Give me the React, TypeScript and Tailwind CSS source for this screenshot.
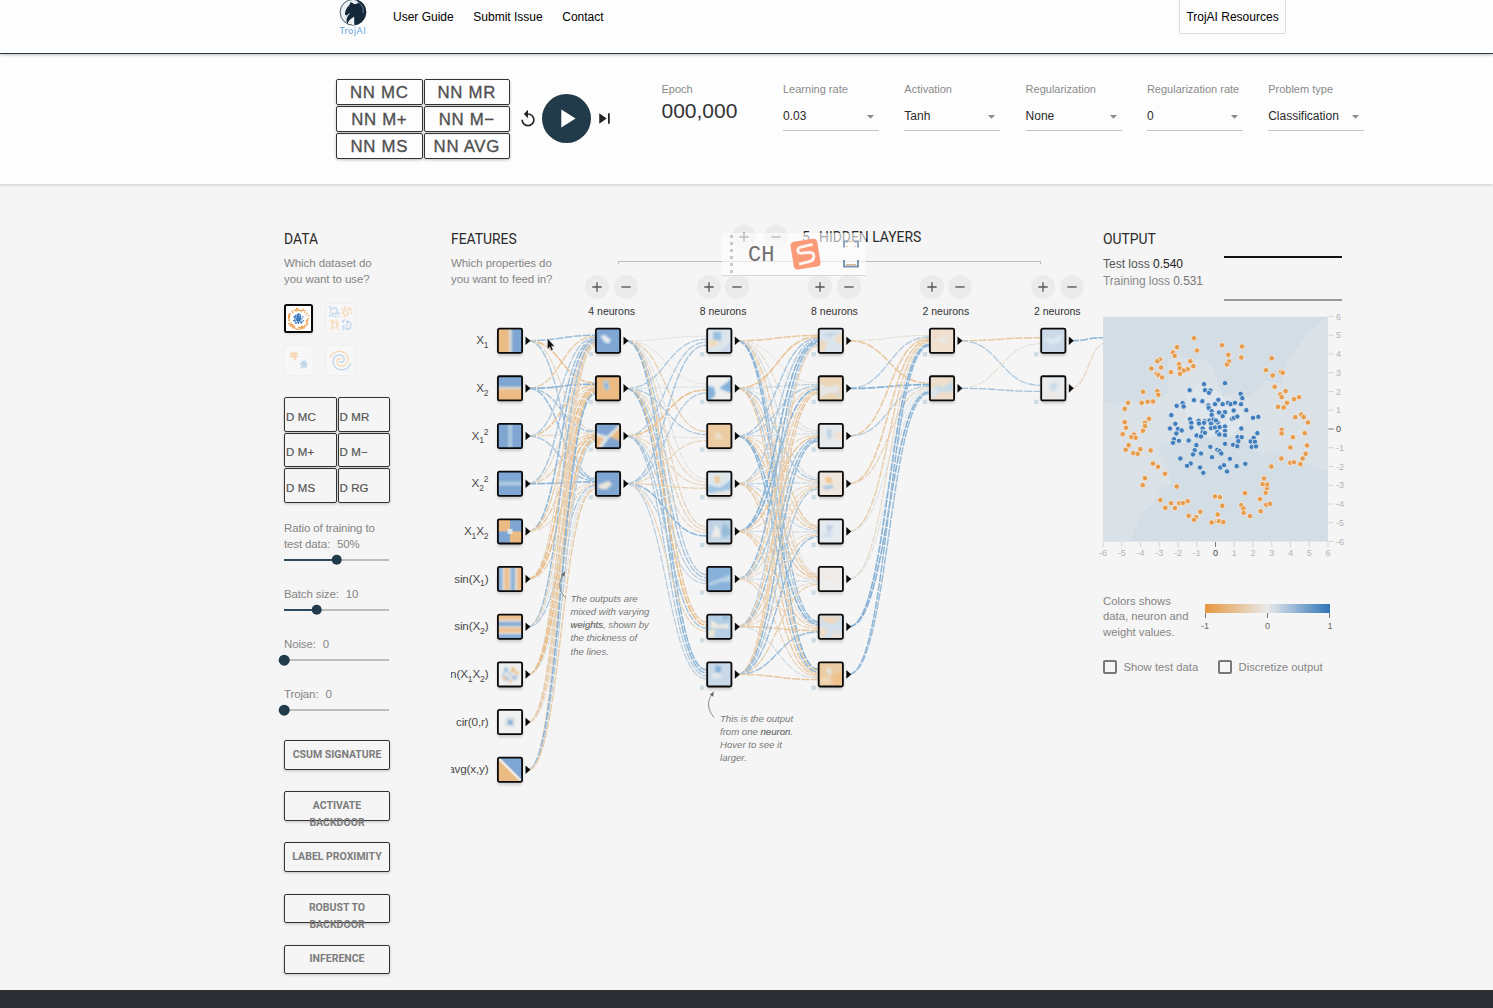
import React from "react";
import { MdReplay, MdSkipNext, MdPlayArrow, MdArrowDropDown, MdAdd, MdRemove } from "react-icons/md";

const SANS = "font-['Liberation_Sans',Arial,sans-serif]";

/* ---------- network data ---------- */
const ROW0 = 340.7;
const ROW = 47.67;
const cy = (i: number) => ROW0 + ROW * i;
const COLS = [510, 608, 719.3, 830.8, 942, 1053.3];
const COUNTS = [10, 4, 8, 8, 2, 2];

const WEIGHTS: number[][][] = [
  [
    [0.7, -0.8, -0.3, 0.6],
    [-0.6, 0.9, 0.6, 0.7],
    [0.5, -0.7, -0.3, 0.6],
    [0.6, -0.3, -0.5, 0.9],
    [0.8, -0.6, -0.6, -0.3],
    [-0.4, -0.9, -0.9, -0.4],
    [0.7, -0.4, 0.1, 0.5],
    [-0.5, -0.8, -0.9, 0.1],
    [-0.4, -0.6, -0.5, -0.2],
    [-0.4, 0.9, 0.4, -0.6],
  ],
  [
    [0.05, -0.1, -0.5, 0.1, -0.4, 0.5, -0.7, 0.8],
    [0.5, 0.1, 0.5, -0.3, -0.4, 0.6, -0.9, 0.8],
    [0.5, -0.8, -0.1, -0.4, -0.3, 0.4, 0.6, 0.5],
    [0.6, 0.5, -0.4, -0.5, 0.8, 0.3, -0.4, 0.4],
  ],
  [
    [-0.7, -0.1, -0.2, 0.2, -0.6, -0.2, 0.7, 0.9],
    [-0.8, 0.3, 0.1, 0.5, -0.4, -0.5, 0.5, -0.6],
    [0.6, 0.5, 0.2, -0.4, -0.5, -0.6, 0.9, 0.8],
    [0.5, -0.4, -0.3, 0.3, 0.3, -0.6, -0.3, -0.6],
    [0.9, 0.9, -0.7, -0.3, 0.2, -0.3, -0.5, -0.6],
    [0.8, -0.5, 0.6, -0.3, -0.2, 0.2, -0.4, -0.4],
    [0.4, -0.6, 0.7, -0.5, -0.4, -0.3, -0.7, 0.2],
    [-0.5, -0.6, 0.8, 0.5, 0.7, -0.5, 0.7, -0.7],
  ],
  [
    [-0.2, -0.7],
    [0.5, 0.95],
    [-0.7, 0.5],
    [-0.7, -0.4],
    [-0.6, 0.1],
    [-0.3, 0.1],
    [0.9, 0.9],
    [0.8, 0.7],
  ],
  [
    [-0.7, 0.5],
    [-0.15, 0.6],
  ],
];

const mix = (w: number) => {
  const a = [228, 230, 230];
  const b = w > 0 ? [126, 173, 212] : [234, 186, 128];
  const t = Math.min(1, Math.abs(w) * 0.95 + 0.05);
  return `rgb(${a.map((v, i) => Math.round(v + (b[i] - v) * t)).join(",")})`;
};

const B = "#7fa5d2";
const O = "#ecbb84";
type Shape = [string, string];
type Tile = { bg: string; s: Shape[]; soft?: number };

const TILES: Tile[][] = [
  [
    { bg: B, s: [["M-4 -4H12V30H-4Z", O], ["M12 -4H15V30H12Z", "#d7dcd8"]] },
    { bg: B, s: [["M-4 13H30V30H-4Z", O], ["M-4 11.5H30V14H-4Z", "#dfdcd0"]] },
    { bg: B, s: [["M11 -4H15.5V30H11Z", "#adc9e0"]] },
    { bg: B, s: [["M-4 10.500H30V15H-4Z", "#adc9e0"]] },
    { bg: B, s: [["M-4 -4H13V13H-4Z", O], ["M13 13H30V30H13Z", O], ["M10.500 10.500H15.500V15.500H10.500Z", "#dfe6ea"]], soft: 0.5 },
    { bg: "#e6e3dc", s: [["M-4 -4H5.500V30H-4Z", "#8db3d8"], ["M7.500 -4H12V30H7.500Z", "#eebf8c"], ["M13.500 -4H18V30H13.500Z", "#8db3d8"], ["M20 -4H30V30H20Z", "#eebf8c"]] },
    { bg: "#e6e3dc", s: [["M-4 -4V6H30V-4Z", "#eebf8c"], ["M-4 8V12.500H30V8Z", "#86acd6"], ["M-4 14V18.500H30V14Z", "#eebf8c"], ["M-4 20.500V30H30V20.500Z", "#86acd6"]] },
    { bg: "#eeefef", s: [["M7 6h4v5h-4zM15 14h5v4h-5zM9 15h3v4h-3zM5 12h3v3h-3z", "#a5c4e0"], ["M14 6h4v5h-4zM6 15h3v4h-3zM12 18h3v3h-3zM18 10h4v3h-4z", "#eec494"], ["M11 11h4v4h-4z", "#c9d5dc"]] },
    { bg: "#f0f1f1", s: [["M8 8h10v10h-10z", "#dfe5e9"], ["M10.800 10.800h5v5h-5z", "#84aed8"]] },
    { bg: B, s: [["M-4 -4L30 30H-4Z", O], ["M-4 -6L30 28V32L-4 -2Z", "#ece8df"]], soft: 0.5 },
  ],
  [
    { bg: B, s: [["M5 8L10 7L16 12L14 16L10 15Z", "#e4ecf1"]] },
    { bg: O, s: [["M8 5L13 5L15 13L11 16L8 11Z", "#b9cbd2"], ["M10 8H13V13H10Z", "#82b0da"]] },
    { bg: B, s: [["M-2 10L9 14L5 28H-4Z", O], ["M13 14L28 -2V20L18 15Z", O], ["M-2 9L12 13L26 0V3L14 15L6 26H3L9 15L-2 12Z", "#e3e9e8"]] },
    { bg: B, s: [["M3 14L14 10L17 14L11 19L4 18Z", "#eae6da"]] },
  ],
  [
    { bg: "#dde5ec", s: [["M7 4L15 4L15 13L7 12Z", "#98c0de"], ["M2 13L10 12L12 17L3 20Z", "#efdcbf"], ["M10 26L26 14V26Z", "#c9d7e8"]] },
    { bg: "#eeeeef", s: [["M-2 10L8 12L9 20L4 25H-2Z", "#85b2da"], ["M13 13L26 3V18L20 16Z", "#85b2da"]] },
    { bg: "#eccba2", s: [["M11 7L14 12L18 16H8Z", "#ecdfc9"]] },
    { bg: "#dfe7ec", s: [["M1 14L14 17L26 8V18L10 22L1 22Z", "#a0c4e1"], ["M8 5L14 6L13 13L9 12Z", "#ecca9c"], ["M10 21L26 20V26H6Z", "#ece6e0"]] },
    { bg: "#bfd3e5", s: [["M18 4L26 14L18 20L14 14Z", "#96bddb"], ["M9 6L14 12L14 19H5Z", "#ebebe9"], ["M2 22H26V26H2Z", "#d3dfeb"]] },
    { bg: "#88b2da", s: [["M2 17L13 13L25 8V16L14 16L3 20Z", "#b9d2e6"]] },
    { bg: "#b6cfe4", s: [["M5 6L12 11L22 10L23 15L10 14L4 14Z", "#eeeae0"], ["M2 17L9 15L8 24H2Z", "#eae2d4"], ["M16 2L24 3L18 7Z", "#8fb9da"]] },
    { bg: "#c9d9e8", s: [["M9 4L15 5L14 11L9 11Z", "#82b0d8"], ["M6 12L13 11L15 17L5 17Z", "#e2e8ec"]] },
  ],
  [
    { bg: "#dbe4ec", s: [["M2 12L10 15L6 24H1Z", "#eed8bd"], ["M17 9L25 5V18L18 14Z", "#f0dcc6"], ["M4 6L20 4L12 10Z", "#c3d6e6"]] },
    { bg: "#ecd6b8", s: [["M2 8L10 12L18 10L24 12L18 18L11 18L2 22Z", "#e4e6e6"], ["M19 15L24 20L20 22Z", "#cfdeea"]] },
    { bg: "#e7eaec", s: [["M9 5L14 7L14 16L9 15Z", "#bfd4e4"], ["M16 9L24 8V18L17 15Z", "#f0e0d2"]] },
    { bg: "#efe6de", s: [["M7 6L14 7L14 12L9 12Z", "#eec48e"], ["M4 16L14 14L16 17L8 19Z", "#a6c6e0"]] },
    { bg: "#e5eaef", s: [["M9 6L15 7L13 14L9 13Z", "#bdd2e5"], ["M5 14L15 15L12 19L6 18Z", "#d0deea"]] },
    { bg: "#efedeb", s: [["M6 8L18 9L16 14L7 14Z", "#f0e9e4"]] },
    { bg: "#d3e0ec", s: [["M2 3H24L16 10L9 9Z", "#f0d8be"], ["M2 14L10 15L6 24H2Z", "#f0dcc4"], ["M16 16L25 20V25H13Z", "#e7dfd8"]] },
    { bg: "#eccca4", s: [["M9 6L14 7L13 14L9 12Z", "#e4e2dc"], ["M14 14L24 10V24H16Z", "#eec08a"], ["M4 15L13 16L12 22H4Z", "#eed8b8"]] },
  ],
  [
    { bg: "#efe0cf", s: [["M10 9L20 10L17 15L10 14Z", "#e8e8e6"], ["M3 3L12 4L7 11Z", "#f0dcc8"]] },
    { bg: "#efdecb", s: [["M6 10L14 12L24 6V17L14 16L8 18Z", "#c6dbe8"], ["M2 12L9 14L7 22H2Z", "#dbe5ed"]] },
  ],
  [
    { bg: "#cbd9e8", s: [["M4 9L13 12L20 6L22 13L13 17L6 14Z", "#dde8f0"]] },
    { bg: "#e9ebec", s: [["M9 9L18 7L16 15L10 15Z", "#cddce8"], ["M4 18L20 19V23H4Z", "#efeae5"]] },
  ],
];

function Link({ x0, y0, x1, y1, w }: { x0: number; y0: number; x1: number; y1: number; w: number }) {
  const m = (x0 + x1) / 2;
  return (
    <path
      d={`M${x0} ${y0}C${m} ${y0} ${m} ${y1} ${x1} ${y1}`}
      fill="none"
      stroke={mix(w)}
      strokeWidth={0.9 + Math.abs(w) * 0.8}
      strokeDasharray="8 1.2"
    />
  );
}

function NodeTile({ x, y, tile, id }: { x: number; y: number; tile: Tile; id: string }) {
  return (
    <g transform={`translate(${x - 13} ${y - 13})`}>
      <rect x="0.500" y="2" width="25" height="26" rx="2" fill="#000" opacity="0.18" filter="url(#shade)" />
      <clipPath id={id}>
        <rect x="1" y="1" width="24" height="24" />
      </clipPath>
      <g clipPath={`url(#${id})`}>
        <rect width="26" height="26" fill={tile.bg} />
        <g filter={tile.soft ? "url(#soft1)" : "url(#soft2)"}>
          {tile.s.map(([d, f], i) => (
            <path key={i} d={d} fill={f} />
          ))}
        </g>
      </g>
      <rect x="0.900" y="0.900" width="24.200" height="24.200" rx="1.500" fill="none" stroke="#0a0a0a" strokeWidth="1.800" />
    </g>
  );
}

/* Each label is a list of [text, baseline shift] pieces; shifted pieces are small. */
const LABELS: [string, number][][] = [
  [["X", 0], ["1", 3.5]],
  [["X", 0], ["2", 3.5]],
  [["X", 0], ["1", 3.5], ["2", -5]],
  [["X", 0], ["2", 3.5], ["2", -5]],
  [["X", 0], ["1", 3.5], ["X", 0], ["2", 3.5]],
  [["sin(X", 0], ["1", 3.5], [")", 0]],
  [["sin(X", 0], ["2", 3.5], [")", 0]],
  [["sin(X", 0], ["1", 3.5], ["X", 0], ["2", 3.5], [")", 0]],
  [["cir(0,r)", 0]],
  [["avg(x,y)", 0]],
];

function Network() {
  const links: React.ReactNode[] = [];
  WEIGHTS.forEach((layer, l) =>
    layer.forEach((row, i) =>
      row.forEach((w, j) => {
        const n = COUNTS[l];
        links.push(
          <Link key={`${l}-${i}-${j}`} x0={COLS[l] + 18} y0={cy(i)} x1={COLS[l + 1] - 13} y1={cy(j) + ((i - (n - 1) / 2) / n) * 12} w={w} />
        );
      })
    )
  );
  return (
    <svg className="absolute left-0 top-0 pointer-events-none" width="652" height="640" viewBox="451 184 652 640" fontFamily="'Liberation Sans', Arial, sans-serif">
      <defs>
        <filter id="soft1"><feGaussianBlur stdDeviation="0.5" /></filter>
        <filter id="soft2"><feGaussianBlur stdDeviation="0.8" /></filter>
        <filter id="shade" x="-30%" y="-30%" width="160%" height="160%"><feGaussianBlur stdDeviation="1.5" /></filter>
      </defs>
      {links}
      <Link x0={1071} y0={cy(0)} x1={1103} y1={337.7} w={0.8} />
      <Link x0={1071} y0={cy(1)} x1={1106} y1={343} w={-0.35} />
      {TILES.map((col, c) =>
        col.map((t, r) => (
          <g key={`${c}-${r}`}>
            {c > 0 && <rect x={COLS[c] - 19.3} y={cy(r) + 11.3} width="4.400" height="4.400" fill="#cfdce3" />}
            <NodeTile x={COLS[c]} y={cy(r)} tile={t} id={`tile-${c}-${r}`} />
            <path d={`M${COLS[c] + 15.5} ${cy(r) - 4.3}l5 4.300l-5 4.300z`} fill="#0a0a0a" />
          </g>
        ))
      )}
      <g fontSize="11.700" fill="#4a4a4a" textAnchor="end">
        {LABELS.map((parts, i) => (
          <text key={i} x="488.500" y={cy(i) + 3.7} letterSpacing="-0.150">
            {parts.map(([t, s], k) => (
              <tspan key={k} dy={s - (k ? parts[k - 1][1] : 0)} fontSize={s ? 8.6 : undefined}>{t}</tspan>
            ))}
          </text>
        ))}
      </g>
      <g fill="none" stroke="#8a8a8a" strokeWidth="1">
        <path d="M565.500 597.500C558 590 558 582 564 573.500" />
        <path d="M714 717.500C707 709 707 701 712.500 693.500" />
      </g>
      <path d="M565 571.500l-4 3l3.500 2.200z" fill="#666" />
      <path d="M713.800 691.500l-4 3l3.500 2.200z" fill="#666" />
      <g fontSize="9.600" fontStyle="italic" fill="#777">
        <text x="570.500" y="602">The outputs are</text>
        <text x="570.500" y="615.200">mixed with varying</text>
        <text x="570.500" y="628.400"><tspan fill="#666" stroke="#666" strokeWidth="0.150">weights</tspan>, shown by</text>
        <text x="570.500" y="641.400">the thickness of</text>
        <text x="570.500" y="654.500">the lines.</text>
        <text x="720" y="722">This is the output</text>
        <text x="720" y="735.200">from one <tspan fill="#666" stroke="#666" strokeWidth="0.150">neuron</tspan>.</text>
        <text x="720" y="748.200">Hover to see it</text>
        <text x="720" y="761.400">larger.</text>
      </g>
      <path d="M547.500 338.500V349l2.300-2l1.600 3.500l1.700-.8l-1.600-3.400h3.100z" fill="#111" stroke="#ddd" strokeWidth="0.400" />
    </svg>
  );
}

/* ---------- scatter plot ---------- */
const ORANGE_PTS =
  "312,354 261,381 249,397 254,407 321,391 396,375 456,379 415,404 417,424 411,433 454,412 545,414 528,450 548,466 573,455 578,458 210,418 202,423 184,445 213,442 267,432 269,444 301,423 310,438 293,447 281,451 270,461 243,456 200,461 206,465 216,472 159,515 202,513 205,524 114,548 104,566 155,548 173,545 189,544 177,596 165,608 165,618 104,606 108,623 98,642 159,632 132,643 124,651 137,653 554,500 587,513 571,523 575,531 591,548 612,537 627,531 564,560 581,562 616,591 634,583 641,591 654,607 575,629 575,640 644,639 609,651 116,675 107,689 151,687 130,699 143,701 182,691 189,730 204,740 225,761 165,774 158,795 260,799 211,840 243,849 226,863 255,864 268,849 279,849 293,843 331,875 296,887 318,891 312,899 375,829 390,831 397,857 383,883 365,907 382,903 387,903 400,906 454,855 460,865 461,878 480,888 465,819 510,837 512,873 529,854 540,851 527,818 531,804 531,793 518,792 522,775 544,739 574,715 601,728 612,726 631,732 638,715 647,701 651,676 601,682";
const BLUE_PTS =
  "405,489 342,492 299,510 345,510 361,511 357,518 452,521 457,534 312,540 337,543 385,539 375,552 398,552 414,548 422,552 435,548 453,552 278,549 281,559 260,557 355,556 356,563 365,573 365,584 387,577 405,576 398,588 431,571 469,570 244,585 426,596 432,593 442,589 489,593 505,590 300,597 304,608 304,622 256,611 240,625 264,626 275,631 259,640 252,657 326,602 327,610 344,603 359,601 370,604 383,607 363,610 338,625 338,636 345,638 363,624 375,622 389,621 405,619 382,636 388,643 405,632 405,645 320,646 333,649 454,625 502,639 443,651 455,651 491,653 296,661 267,662 249,668 405,671 429,674 442,678 445,663 482,664 485,680 495,665 498,679 319,675 314,690 361,680 382,689 389,693 394,700 309,703 333,700 366,711 271,715 302,730 291,737 330,742 340,758 391,742 402,735 411,754 420,716 440,738 466,731 371,598 378,601 342,608";
const parse = (s: string) => s.split(" ").map((p) => p.split(",").map(Number));

function Plot() {
  const ticks = Array.from({ length: 13 }, (_, i) => i - 6);
  return (
    <svg width="250" height="246" viewBox="1098 313 250 246" className="block -ml-[5px]" fontFamily="'Liberation Sans', Arial, sans-serif">
      <svg x="1103" y="316.500" width="225" height="225.300" viewBox="39 289 675 676">
        <rect x="39" y="289" width="675" height="676" fill="#d3dde6" />
        <path d="M39 545L90 553L125 540L160 552L200 535L232 520L238 460L232 420L262 405L300 420L345 420L372 450L385 490L400 525L440 520L480 530L510 500L525 480L575 490L590 425L625 380L660 330L714 289V752L675 745L665 735L625 722L580 715L560 690L510 705L480 670L400 640L330 650L290 670L235 665L200 680L225 720L245 790L215 800L190 850L155 880L125 950L110 965H39Z" fill="#dae2e8" />
        <path d="M285 520L340 480L385 520L440 560L470 600L420 650L330 650L285 600Z" fill="#e0e7ec" />
        <g fill="#e79b4d" stroke="#f3ede4" strokeWidth="2.500">
          {parse(ORANGE_PTS).map(([x, y], i) => <circle key={i} cx={x} cy={y} r="8.200" />)}
        </g>
        <g fill="#3f7dbd" stroke="#e4ebf1" strokeWidth="2.500">
          {parse(BLUE_PTS).map(([x, y], i) => <circle key={i} cx={x} cy={y} r="8" />)}
        </g>
      </svg>
      {ticks.map((t) => {
        const x = 1215.5 + t * 18.75;
        const y = 429 - t * 18.75;
        const f = t === 0 ? "#444" : "#b4b4b4";
        const s = t === 0 ? "#777" : "#d4d4d4";
        return (
          <g key={t} fill={f} fontSize="9">
            <path d={`M${x} 542v5M1328.500 ${y}h5`} stroke={s} />
            <text x={x} y="556" textAnchor="middle">{t}</text>
            <text x="1336" y={y + 3.2}>{t}</text>
          </g>
        );
      })}
    </svg>
  );
}

/* ---------- sidebar pieces ---------- */
function ring(n: number, cx: number, cyy: number, r0: number, r1: number, seed: number) {
  let s = seed * 7919;
  const rnd = () => ((s = (s * 16807) % 2147483647) / 2147483647);
  return Array.from({ length: n }, () => {
    const a = rnd() * Math.PI * 2;
    const r = r0 + rnd() * (r1 - r0);
    return [cx + Math.cos(a) * r, cyy + Math.sin(a) * r];
  });
}
function box(n: number, x: number, y: number, w: number, seed: number) {
  let s = seed * 7919;
  const rnd = () => ((s = (s * 16807) % 2147483647) / 2147483647);
  return Array.from({ length: n }, () => [x + rnd() * w, y + rnd() * w]);
}
const Dots = ({ p, f }: { p: number[][]; f: string }) => (
  <g fill={f}>{p.map(([x, y], i) => <circle key={i} cx={x} cy={y} r="0.750" />)}</g>
);
const spiral = (ph: number) =>
  "M" + Array.from({ length: 60 }, (_, i) => {
    const a = -(i / 59) * 8.2 + ph;
    const r = 0.8 + (i / 59) * 10;
    return `${(14.5 + Math.cos(a) * r).toFixed(1)} ${(14.5 + Math.sin(a) * r).toFixed(1)}`;
  }).join("L");

function Thumb({ kind }: { kind: "circle" | "xor" | "gauss" | "spiral" }) {
  const on = kind === "circle";
  return (
    <div className={on ? "h-[29px] w-[29px] rounded-[2px] bg-white shadow" : "h-[29px] w-[29px] rounded-[2px] bg-white/20 shadow-[0_0_1px_rgba(0,0,0,0.2)]"}>
      <svg width="29" height="29" viewBox="0 0 29 29">
        <g opacity={on ? 1 : 0.3}>
          {kind === "circle" && (<><Dots p={ring(90, 14.5, 15, 8.3, 10.8, 17)} f="#f0a050" /><Dots p={ring(80, 14.5, 15, 0, 5.2, 91)} f="#3f7dc0" /></>)}
          {kind === "xor" && (<><Dots p={[...box(36, 3, 3, 10, 5), ...box(36, 16, 16, 10, 7)]} f="#3f8ad0" /><Dots p={[...box(36, 16, 3, 10, 11), ...box(36, 3, 16, 10, 13)]} f="#f59322" /></>)}
          {kind === "gauss" && (<><Dots p={ring(60, 10, 9.5, 0, 4, 23)} f="#f59322" /><Dots p={ring(60, 19.5, 18.5, 0, 4, 29)} f="#3f8ad0" /></>)}
          {kind === "spiral" && (<g fill="none" strokeWidth="1.400"><path d={spiral(2.2)} stroke="#3f8ad0" /><path d={spiral(5.34)} stroke="#f59322" /></g>)}
        </g>
        {on && <rect x="1" y="1" width="27" height="27" rx="1.500" fill="none" stroke="#0a0a0a" strokeWidth="2" />}
      </svg>
    </div>
  );
}

function Slider({ label, value, pct }: { label: React.ReactNode; value: string; pct: number }) {
  return (
    <div className="h-[50.300px]">
      <div className="text-[11.500px] leading-4 text-[#858585] whitespace-nowrap tracking-[-0.130px]">{label}<span className="ml-[7px]">{value}</span></div>
      <div className="relative mt-[7px] h-[2px] w-[105px] bg-[#bdbdbd]">
        <div className="h-full bg-[#2b4a5c]" style={{ width: `${pct}%` }} />
        <div className="absolute top-1/2 h-[10.600px] w-[10.600px] -translate-x-1/2 -translate-y-1/2 rounded-full bg-[#223b4b]" style={{ left: `${pct}%` }} />
      </div>
    </div>
  );
}

const CircleBtn = ({ minus }: { minus?: boolean }) => (
  <div className="flex h-6 w-6 items-center justify-center rounded-full bg-[#ebebeb] text-[#555]">
    {minus ? <MdRemove size={16} /> : <MdAdd size={16} />}
  </div>
);

const Heading = ({ children }: { children: React.ReactNode }) => (
  <h4 className="font-[Roboto,sans-serif] text-[13.900px] leading-5 text-[#2a2a2a] whitespace-nowrap">{children}</h4>
);

const SELECTS = [
  ["Learning rate", "0.03"],
  ["Activation", "Tanh"],
  ["Regularization", "None"],
  ["Regularization rate", "0"],
  ["Problem type", "Classification"],
];

export default function App() {
  return (
    <div className={`flex h-[1008px] w-[1493px] flex-col overflow-hidden bg-[#f5f5f5] ${SANS}`}>
      <header className="relative z-10 flex h-[54px] shrink-0 items-start border-b border-[#2a3944] bg-[#fdfdfd] pl-[339px] text-[12px] text-black shadow-[0_1px_3px_rgba(0,0,0,0.25)]">
        <div className="flex w-7 flex-col items-center">
          <svg width="28" height="26" viewBox="0 0 28 26">
            <circle cx="14" cy="12.300" r="12.900" fill="#e9eff3" stroke="#1c3346" strokeWidth="0.800" />
            <path d="M17 -.3C26 1.500 29 10 26 17C24 22 20 25 14 25.200C13.500 22 13.600 19 15.500 16.500C11 19 9.500 21 8.500 24C6.500 21 7.500 17 11 13.500C9.500 13.500 9 14 8.200 15.500L6 14.800C5.800 11 7.500 8 9.500 6C10.500 4.800 11.200 4 11.500 2C13 2.600 14 3.200 15 4C17 4 18.500 3.500 19.500 2.500Z" fill="#14283a" />
            <path d="M17.500 1.500C22.500 3.500 25 8 24 13" fill="none" stroke="#8fa4b3" strokeWidth="0.700" />
            <path d="M13.500 25.200C12.500 21.500 13 19 15 16.500C15.600 20 14.800 22 15.500 25.200Z" fill="#f4f7f9" />
          </svg>
          <span className="font-[Lato,sans-serif] text-[9px] leading-[10px] tracking-[0.600px] text-[#6aa5d8]">TrojAI</span>
        </div>
        <nav className="ml-[26px] flex gap-[19.600px] pt-[9px] leading-4">
          <a>User Guide</a>
          <a>Submit Issue</a>
          <a>Contact</a>
        </nav>
        <div className="ml-auto mr-[207px] flex h-[34px] w-[107px] items-center justify-center rounded-b-[2px] border border-t-0 border-[#dcdcdc] text-[12px]">TrojAI Resources</div>
      </header>

      <section className="flex h-[130px] shrink-0 bg-[#fdfdfd] pl-[336px] shadow-[0_1px_3px_rgba(0,0,0,0.18)]">
        <div className="mt-[25px] grid h-[80px] grid-cols-2 gap-x-[1px] gap-y-[1px] self-start">
          {["NN MC", "NN MR", "NN M+", "NN M−", "NN MS", "NN AVG"].map((t) => (
            <div key={t} className="flex h-[26px] w-[86.500px] items-center justify-center rounded-[2px] border border-[#333] pt-[1px] text-[16.800px] tracking-[0.700px] text-[#505050] shadow-[0_1px_3px_rgba(0,0,0,0.25)] [-webkit-text-stroke:0.350px_#505050]">{t}</div>
          ))}
        </div>
        <div className="ml-[8px] mt-[40px] flex h-[49px] items-center">
          <MdReplay size={20} className="text-[#222]" />
          <div className="ml-[4px] flex h-[49px] w-[49px] items-center justify-center rounded-full bg-[#223b4b] text-white">
            <MdPlayArrow size={31} />
          </div>
          <MdSkipNext size={21} className="ml-[3px] text-[#222]" />
        </div>
        <div className="ml-[46.500px] mt-[26.500px] w-[121.500px]">
          <div className="text-[11px] leading-4 text-[#8a8a8a]">Epoch</div>
          <div className="mt-[1.500px] text-[21px] leading-[26px] text-[#333]">000,000</div>
        </div>
        {SELECTS.map(([l, v]) => (
          <div key={l} className="mt-[26.500px] w-[121.300px]">
            <div className="text-[11px] leading-4 whitespace-nowrap text-[#8a8a8a]">{l}</div>
            <div className="mt-[8.500px] flex h-[26px] w-[96px] items-center justify-between border-b border-[#c4c4c4] pb-[3px] text-[12px] text-[#2a2a2a]">
              {v}
              <MdArrowDropDown size={17} className="text-[#8a8a8a]" />
            </div>
          </div>
        ))}
      </section>

      <main className="flex h-[806px] shrink-0 pl-[284px]">
        {/* data column */}
        <aside className="w-[106px] shrink-0 pt-[45px]">
          <Heading>DATA</Heading>
          <p className="mt-[6px] text-[11.500px] leading-4 tracking-[-0.080px] whitespace-nowrap text-[#858585]">Which dataset do<br />you want to use?</p>
          <div className="mt-[17px] grid w-[72px] grid-cols-[29px_29px] gap-x-[13px] gap-y-[13px]">
            <Thumb kind="circle" />
            <Thumb kind="xor" />
            <Thumb kind="gauss" />
            <Thumb kind="spiral" />
          </div>
          <div className="mt-[22px] grid grid-cols-2 gap-px">
            {["D MC", "D MR", "D M+", "D M−", "D MS", "D RG"].map((t) => (
              <div key={t} className="flex h-[34.700px] items-center rounded-[2px] border border-[#333] pl-[1px] pt-[6px] text-[11.500px] tracking-[0.100px] text-[#555] shadow-[0_1px_3px_rgba(0,0,0,0.2)] [-webkit-text-stroke:0.200px_#555]">{t}</div>
            ))}
          </div>
          <div className="mt-[16.500px]">
            <div className="text-[11.500px] leading-4 tracking-[-0.130px] whitespace-nowrap text-[#858585]">Ratio of training to</div>
            <Slider label="test data:" value="50%" pct={50} />
            <Slider label="Batch size:" value="10" pct={31} />
            <Slider label="Noise:" value="0" pct={0} />
            <Slider label="Trojan:" value="0" pct={0} />
          </div>
          <div className="mt-[3.300px] flex flex-col gap-[21.700px]">
            {["CSUM SIGNATURE", "ACTIVATE BACKDOOR", "LABEL PROXIMITY", "ROBUST TO BACKDOOR", "INFERENCE"].map((t) => (
              <div key={t} className="h-[29.500px] rounded-[2px] border border-[#333] pt-[4.500px] text-center font-[Roboto,sans-serif] text-[10.500px] font-bold leading-[17.300px] text-[#7c7c7c] shadow-[0_1px_3px_rgba(0,0,0,0.22)]">{t}</div>
            ))}
          </div>
        </aside>

        {/* features and hidden layers */}
        <section className="relative ml-[61px] w-[652px] shrink-0">
          <Network />
          <div className="flex">
            <div className="w-[105px] shrink-0 pt-[45px]">
              <Heading>FEATURES</Heading>
              <p className="mt-[6px] text-[11.500px] leading-4 tracking-[-0.080px] whitespace-nowrap text-[#858585]">Which properties do<br />you want to feed in?</p>
            </div>
            <div className="pt-[41px]">
              <div className="flex h-6 items-center pl-[176px]">
                <CircleBtn />
                <div className="w-2" />
                <CircleBtn minus />
                <span className="ml-[14px] w-[17px] font-[Roboto,sans-serif] text-[13.900px] text-[#2a2a2a]">5</span>
                <Heading>HIDDEN LAYERS</Heading>
              </div>
              <div className="ml-[62px] mt-[12px] h-[3px] w-[423px] border border-b-0 border-[#bdbdbd]" />
              <div className="mt-[11px] flex">
                {[4, 8, 8, 2, 2].map((n, i) => (
                  <div key={i} className="w-[111.400px] shrink-0">
                    <div className="flex justify-center gap-[4.500px]"><CircleBtn /><CircleBtn minus /></div>
                    <div className="mt-[4px] text-center text-[10.500px] leading-4 text-[#333]">{n} neurons</div>
                  </div>
                ))}
              </div>
            </div>
          </div>
          {/* floating input-method bar */}
          <div className="absolute left-[271px] top-[49px] flex h-[43px] w-[144px] items-center border-b border-[#d8d8d8] bg-white/60">
            <div className="ml-[8px] flex h-full flex-col justify-between py-[2px]">
              {[0, 1, 2, 3, 4, 5].map((k) => <span key={k} className="h-[3px] w-[3px] bg-[#c9c9c9]" />)}
            </div>
            <span className="ml-[15px] mt-[3px] w-[28px] font-['Liberation_Mono',monospace] text-[22px] text-[#6f6f6f]">CH</span>
            <svg className="ml-[13px]" width="34" height="34" viewBox="0 0 34 34">
              <g transform="rotate(-9 17 17)">
                <rect x="3" y="3" width="27" height="28" rx="4" fill="#fb9a78" />
                <path d="M25 8.500L13 9.500Q9 10 9.500 13T14 15.500L21 16Q25 17 24.500 20.500T20 25L8.500 26" fill="none" stroke="#fff5f0" strokeWidth="2.800" />
              </g>
            </svg>
            <svg className="ml-[19px]" width="18" height="32" viewBox="0 0 18 32">
              <g fill="none" strokeWidth="2">
                <path d="M2 9.500V3.500H6M12 3.500H16V9.500" stroke="#8fa6be" />
                <path d="M6 3.500H12M4 8.500H6M12 8.500H14" stroke="#e8c8a0" strokeWidth="1" />
                <path d="M2 22V28.500H16V22" stroke="#7d97b2" />
                <path d="M4 26.500H14" stroke="#e0b78a" strokeWidth="1" />
              </g>
            </svg>
          </div>
        </section>

        {/* output */}
        <section className="w-[250px] shrink-0 pt-[45px]">
          <Heading>OUTPUT</Heading>
          <div className="flex h-[63.500px] text-[12px]">
            <div className="w-[120.500px] pt-[7px] leading-[17px] whitespace-nowrap">
              <div className="text-[#555]">Test loss <span className="text-[#222]">0.540</span></div>
              <div className="tracking-[-0.050px] text-[#8a8a8a]">Training loss <span className="text-[#777]">0.531</span></div>
            </div>
            <div className="mt-[7px] h-[45px] w-[118px] border-b-2 border-t-2 border-b-[#999] border-t-[#111]" />
          </div>
          <Plot />
          <div className="mt-[35px] flex">
            <p className="w-[96px] text-[11.300px] leading-[15.700px] whitespace-nowrap text-[#858585]">Colors shows<br />data, neuron and<br />weight values.</p>
            <svg className="mt-[9px]" width="140" height="30" viewBox="1199 603 140 30" fontFamily="'Liberation Sans', Arial, sans-serif">
              <defs>
                <linearGradient id="legend"><stop offset="0" stopColor="#e8963f" /><stop offset="0.500" stopColor="#e8eaeb" /><stop offset="1" stopColor="#2f74b8" /></linearGradient>
              </defs>
              <rect x="1205" y="604" width="125" height="9" fill="url(#legend)" />
              <path d="M1205.500 613v5M1267.500 613v5M1329.500 613v5" stroke="#777" />
              <g fontSize="9" fill="#666" textAnchor="middle">
                <text x="1205" y="629">-1</text>
                <text x="1267.500" y="629">0</text>
                <text x="1330" y="629">1</text>
              </g>
            </svg>
          </div>
          <div className="mt-[18.500px] flex items-center text-[11.300px] leading-4 whitespace-nowrap text-[#858585]">
            <span className="h-[14px] w-[14px] rounded-[2px] border-2 border-[#777]" />
            <span className="ml-[6.500px] w-[94.500px]">Show test data</span>
            <span className="h-[14px] w-[14px] rounded-[2px] border-2 border-[#777]" />
            <span className="ml-[6.500px]">Discretize output</span>
          </div>
        </section>
      </main>
      <footer className="h-[18px] shrink-0 bg-[#2b2f33]" />
    </div>
  );
}
